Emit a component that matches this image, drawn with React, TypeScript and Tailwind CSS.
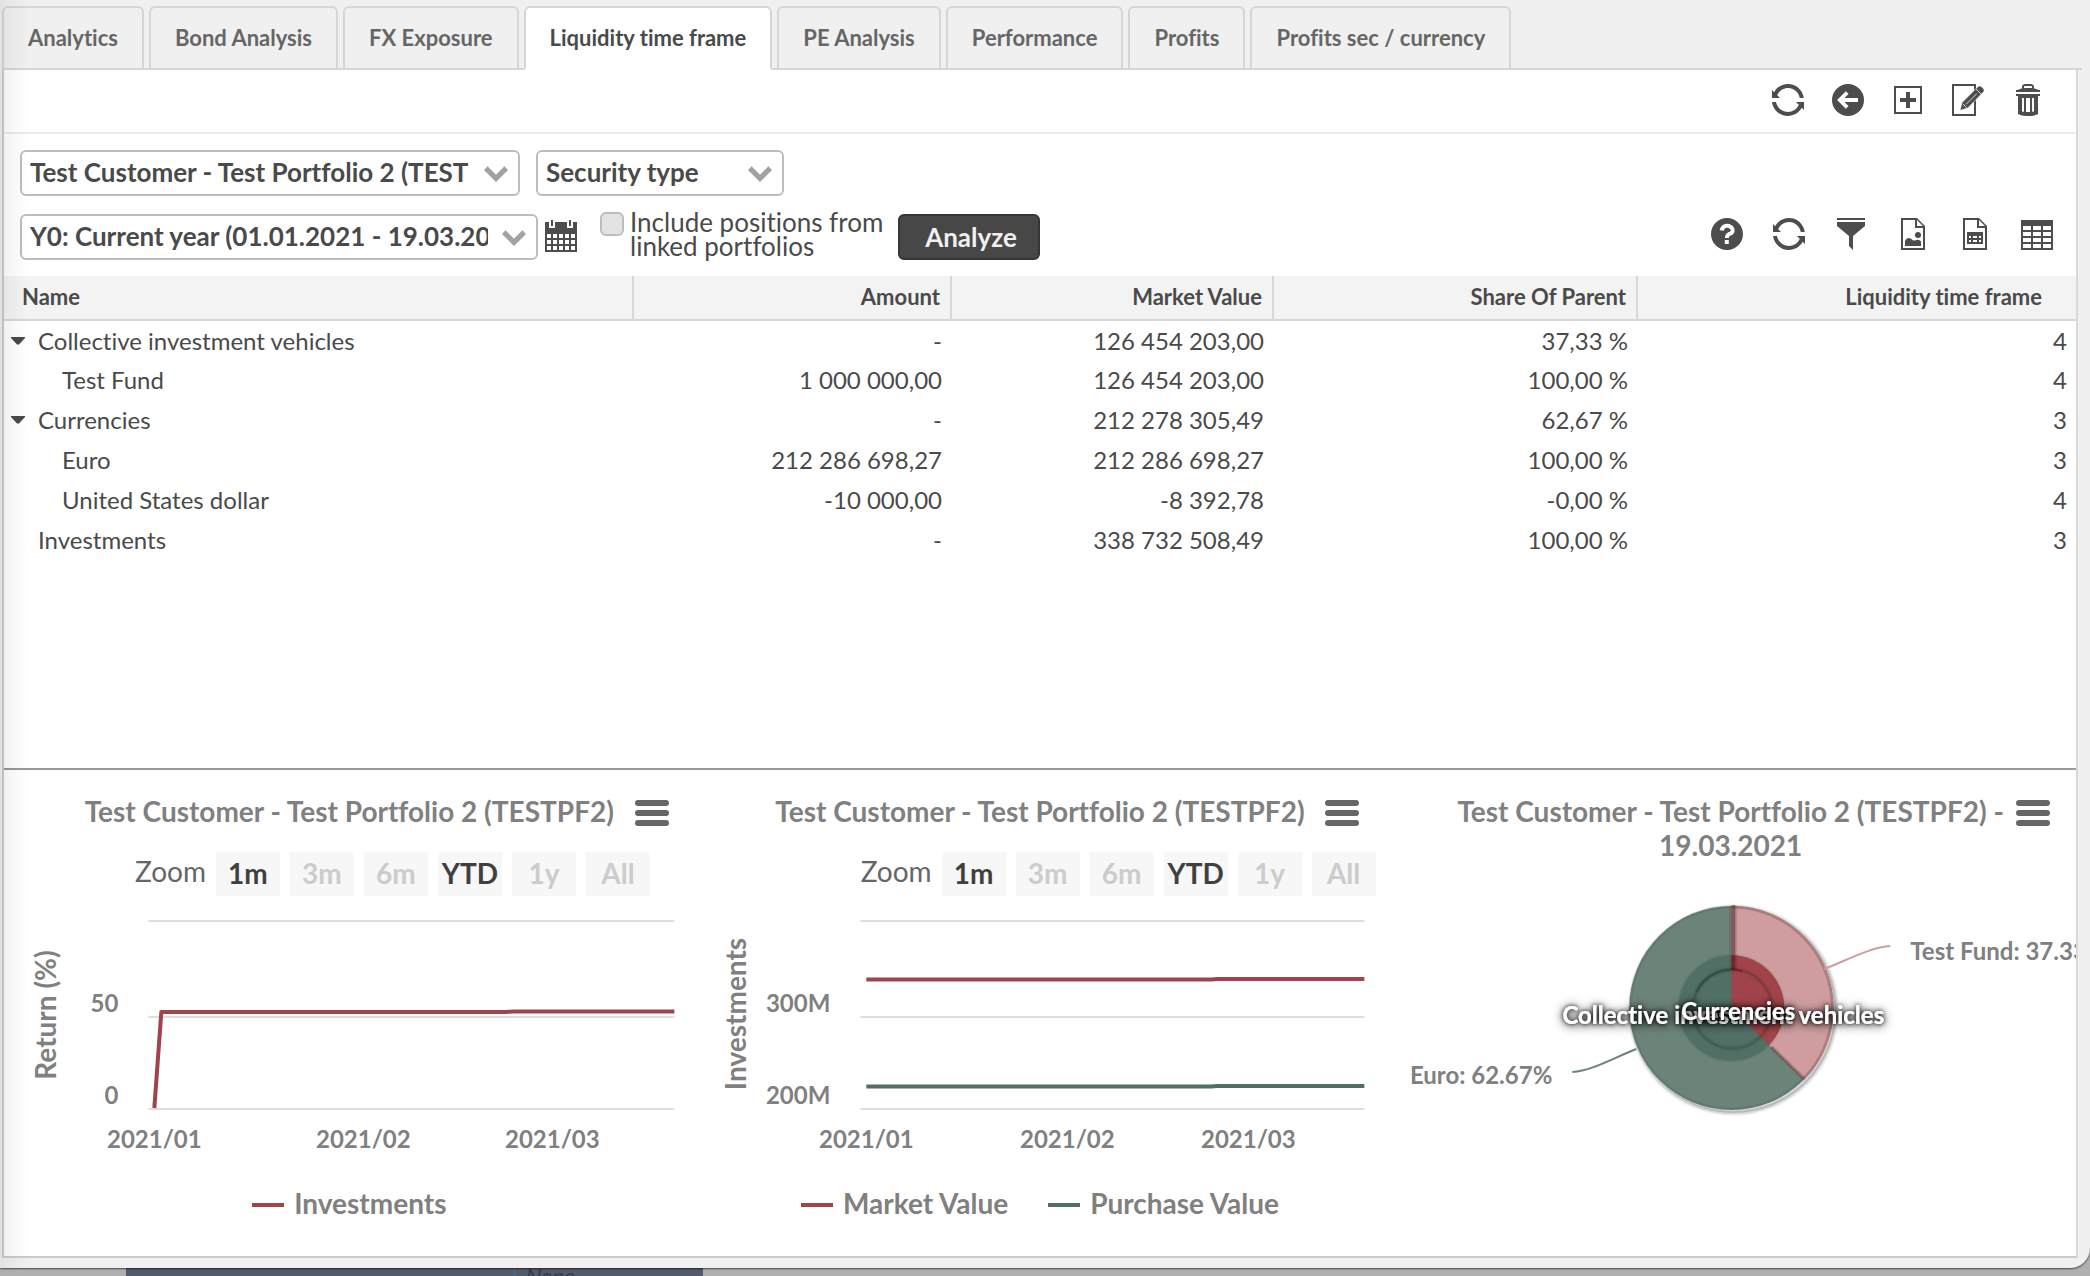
import { useState } from "react";
import type { ReactNode } from "react";
import clsx from "clsx";

const TABS = [
  "Analytics",
  "Bond Analysis",
  "FX Exposure",
  "Liquidity time frame",
  "PE Analysis",
  "Performance",
  "Profits",
  "Profits sec / currency",
];

type Row = {
  name: string;
  amount: string;
  marketValue: string;
  share: string;
  liquidity: string;
  children?: Row[];
};

const ROWS: Row[] = [
  {
    name: "Collective investment vehicles",
    amount: "-",
    marketValue: "126 454 203,00",
    share: "37,33 %",
    liquidity: "4",
    children: [
      { name: "Test Fund", amount: "1 000 000,00", marketValue: "126 454 203,00", share: "100,00 %", liquidity: "4" },
    ],
  },
  {
    name: "Currencies",
    amount: "-",
    marketValue: "212 278 305,49",
    share: "62,67 %",
    liquidity: "3",
    children: [
      { name: "Euro", amount: "212 286 698,27", marketValue: "212 286 698,27", share: "100,00 %", liquidity: "3" },
      { name: "United States dollar", amount: "-10 000,00", marketValue: "-8 392,78", share: "-0,00 %", liquidity: "4" },
    ],
  },
  { name: "Investments", amount: "-", marketValue: "338 732 508,49", share: "100,00 %", liquidity: "3" },
];

const RED = "#a04449";
const GREEN = "#516f65";

function App() {
  const [activeTab, setActiveTab] = useState("Liquidity time frame");

  return (
    <div className="flex min-h-screen flex-col bg-[#b0b0b0] font-[Lato,sans-serif] text-[#4a4a4a] [font-variant-ligatures:none]">
      <div className="relative flex flex-1 flex-col rounded-br-[20px] bg-[#f0f0f0] pb-2.5 shadow-[0_1px_2px_rgba(0,0,0,0.6)]">
        <div role="tablist" className="mr-2 ml-0.5 flex gap-[5px] border-b-2 border-[#d6d6d6] pt-1.5">
          {TABS.map((tab) => (
            <button
              key={tab}
              role="tab"
              aria-selected={tab === activeTab}
              onClick={() => setActiveTab(tab)}
              className={clsx(
                "-mb-0.5 h-16 rounded-t-md border-2 border-[#d6d6d6] px-6 pb-0.5 text-[22px] font-bold whitespace-nowrap",
                tab === activeTab ? "border-b-white bg-white text-[#4a4a4a]" : "bg-[#f0f0f0] text-[#666]"
              )}
            >
              {tab}
            </button>
          ))}
        </div>

        <div className="mr-3 ml-0.5 flex flex-1 flex-col border-2 border-t-0 border-[#cbcbcb] border-r-[#d8d8d8] bg-white">
          <Toolbar />
          <Filters />
          <div className="flex-1">
            <PositionsTable />
          </div>
          <Charts />
        </div>

        <div
          aria-hidden
          className="pointer-events-none absolute inset-y-0 left-0 w-7 bg-gradient-to-r from-black/6 to-transparent"
        />
      </div>

      <BackdropStrip />
    </div>
  );
}

function Toolbar() {
  return (
    <div className="flex h-16 items-center justify-end gap-7 border-b-2 border-[#ebebeb] pr-8 pb-0.5">
      <IconButton label="Refresh">
        <RefreshIcon />
      </IconButton>
      <IconButton label="Back">
        <circle cx="8" cy="8" r="8" />
        <path d="M13 8H4.2M7.6 4.3L3.9 8l3.7 3.7" fill="none" stroke="#fff" strokeWidth="1.9" />
      </IconButton>
      <IconButton label="Add">
        <path d="M1 1v14h14V1H1zM14 14H2V2h12v12z" />
        <path d="M7 4h2v3h3v2H9v3H7V9H4V7h3z" />
      </IconButton>
      <IconButton label="Edit">
        <path d="M0 0v16h12V0H0zM11 15H1V1h10v14z" />
        <path
          d="M4 13.2l1-3.900L12.900 1.400c.6-.6 1.300-.6 1.900 0l.8.8c.6.6.6 1.300 0 1.900L7.900 12 4 13.200z"
          stroke="#fff"
          strokeWidth=".3"
        />
        <path d="M5.400 9.900l1.900 1.900M7 10.200l5.400-5.400M12 2.500l2.600 2.600" stroke="#fff" strokeWidth=".4" />
      </IconButton>
      <IconButton label="Delete">
        <path d="M13 3s0-.51-2-.8v-.7C10.983.668 10.305 0 9.470 0h-3C5.655.017 5 .682 5 1.500v.7c-.765.068-1.452.359-2.007.806L2 3v1h12V3h-1zM6 1.500c.005-.274.226-.495.499-.5H9.500c.282 0 .513.220.529.499v.561C9.676 2.018 9.266 1.995 8.851 1.995 8.300 2 6.440 2 6 2.070V1.500z" />
        <path d="M2 5v1h1v9c1.234.631 2.692 1 4.236 1h1.528c1.544 0 3.002-.369 4.289-1.025L13 6h1V5H2zm4 8.920q-.51-.06-1-.17V7h1v6.920zM9 14H7V7h2v7zm2-.28c-.267.070-.606.136-.95.184L10 7h1v6.720z" />
      </IconButton>
    </div>
  );
}

function Filters() {
  return (
    <div className="pt-4 pb-4 pl-4">
      <div className="flex gap-4">
        <Select
          label="Portfolio"
          className="w-[500px]"
          options={["Test Customer - Test Portfolio 2 (TESTPF2)"]}
        />
        <Select label="Grouping" className="w-[248px]" options={["Security type"]} />
      </div>

      <div className="mt-3.5 flex min-h-[50px] items-end">
        <Select
          label="Period"
          className="w-[518px]"
          options={["Y0: Current year (01.01.2021 - 19.03.2021)"]}
        />
        <button aria-label="Pick dates" className="mb-2 ml-[7px] size-8">
          <Icon>
            <path d="M0 1h2v3h3V1h6v3h3V1h2v15H0V1zm1 6v2h2V7H1zm3 0v2h2V7H4zm3 0v2h2V7H7zm3 0v2h2V7h-2zm3 0v2h2V7h-2zM1 10v2h2v-2H1zm3 0v2h2v-2H4zm3 0v2h2v-2H7zm3 0v2h2v-2h-2zm3 0v2h2v-2h-2zM1 13v2h2v-2H1zm3 0v2h2v-2H4zm3 0v2h2v-2H7zm3 0v2h2v-2h-2zm3 0v2h2v-2h-2z" />
            <path d="M3 0h1v3H3zM12 0h1v3h-1z" />
          </Icon>
        </button>
        <div className="ml-[23px] flex w-[298px] items-start gap-1.5 self-start">
          <input
            id="linked"
            type="checkbox"
            className="mt-0.5 size-6 shrink-0 appearance-none rounded-md border-2 border-[#bdbdbd] bg-[#e3e3e3] checked:bg-[#4a4a4a]"
          />
          <label htmlFor="linked" className="text-[26px] leading-6">
            Include positions from
            <br />
            linked portfolios
          </label>
        </div>
        <button className="h-[46px] w-[142px] rounded-md border-2 border-[#363636] bg-[#474747] pl-1 text-[26px] font-bold text-[#f0f0f0]">
          Analyze
        </button>

        <div className="mb-2.5 ml-auto flex gap-[30px] pr-[23px]">
          <IconButton label="Help">
            <path d="M8 0C3.600 0 0 3.600 0 8s3.600 8 8 8 8-3.600 8-8-3.600-8-8-8zm.9 13h-2v-2h2v2zM11 8.100c-.4.400-.8.600-1.200.7-.6.400-.8.200-.8 1.200H7c0-2 1.200-2.600 2-3 .3-.1.500-.2.700-.4.100-.1.300-.3.100-.7-.2-.5-.8-1-1.700-1-1.400 0-1.600 1.200-1.700 1.500l-2-.3c.1-1.100 1-3.200 3.600-3.200 1.600 0 3 .9 3.600 2.200.4 1.100.2 2.200-.6 3z" />
          </IconButton>
          <IconButton label="Reload">
            <RefreshIcon />
          </IconButton>
          <IconButton label="Filter">
            <path d="M1 0h14v1H1zM1 2v2l6 5v5l2 2V9l6-5V2H1z" />
          </IconButton>
          <IconButton label="Export image">
            <FileOutline />
            <circle cx="10.500" cy="8.500" r="1.500" />
            <path d="M4 11.500C4.400 10.500 5.200 10 6 10c1.200 0 1.600 1.300 2.500 1.300.700 0 1-.4 1.700-.4.800 0 1.400.3 1.800.8V14H4v-2.500z" />
          </IconButton>
          <IconButton label="Export spreadsheet">
            <FileOutline />
            <path d="M4 7v6h8V7H4zm2 3H5V9h1v1zm3 0H7V9h2v1zm2 0h-1V9h1v1zm-5 2H5v-1h1v1zm3 0H7v-1h2v1zm2 0h-1v-1h1v1z" />
          </IconButton>
          <IconButton label="Columns">
            <path d="M0 1v15h16V1H0zm5 14H1v-2h4v2zm0-3H1v-2h4v2zm0-3H1V7h4v2zm0-3H1V4h4v2zm5 9H6v-2h4v2zm0-3H6v-2h4v2zm0-3H6V7h4v2zm0-3H6V4h4v2zm5 9h-4v-2h4v2zm0-3h-4v-2h4v2zm0-3h-4V7h4v2zm0-3h-4V4h4v2z" />
          </IconButton>
        </div>
      </div>
    </div>
  );
}

function Select({ label, options, className }: { label: string; options: string[]; className: string }) {
  return (
    <div className={clsx("relative h-[46px]", className)}>
      <select
        aria-label={label}
        className="h-full w-full appearance-none rounded-md border-2 border-[#bdbdbd] bg-white pr-12 pb-0.5 pl-2 text-[26px] font-bold"
      >
        {options.map((option) => (
          <option key={option}>{option}</option>
        ))}
      </select>
      <svg viewBox="0 0 24 16" className="pointer-events-none absolute top-4 right-3 h-4 w-6">
        <path d="M1.800 2.200L12 12.300 22.200 2.200" fill="none" stroke="#a2a2a2" strokeWidth="5.200" />
      </svg>
    </div>
  );
}

function PositionsTable() {
  const [collapsed, setCollapsed] = useState<string[]>([]);

  const toggle = (name: string) =>
    setCollapsed((prev) => (prev.includes(name) ? prev.filter((n) => n !== name) : [...prev, name]));

  return (
    <table className="w-full table-fixed border-collapse text-right text-2xl">
      <thead>
        <tr className="h-11 border-b-2 border-[#d8d8d8] bg-[#f3f3f3] text-[22px]">
          <th className="w-[629px] border-r-2 border-[#d8d8d8] pb-0.5 pl-[18px] text-left font-bold">Name</th>
          <th className="w-[318px] border-r-2 border-[#d8d8d8] pr-2.5 pb-0.5 font-bold">Amount</th>
          <th className="w-[322px] border-r-2 border-[#d8d8d8] pr-2.5 pb-0.5 font-bold">Market Value</th>
          <th className="w-[364px] border-r-2 border-[#d8d8d8] pr-2.5 pb-0.5 font-bold">Share Of Parent</th>
          <th className="pr-[34px] pb-0.5 font-bold">Liquidity time frame</th>
        </tr>
      </thead>
      <tbody>
        {ROWS.flatMap((row) => {
          const open = !collapsed.includes(row.name);
          return [
            <PositionRow key={row.name} row={row} open={open} onToggle={() => toggle(row.name)} />,
            ...(open ? (row.children ?? []) : []).map((child) => <PositionRow key={child.name} row={child} nested />),
          ];
        })}
      </tbody>
    </table>
  );
}

function PositionRow({
  row,
  nested,
  open,
  onToggle,
}: {
  row: Row;
  nested?: boolean;
  open?: boolean;
  onToggle?: () => void;
}) {
  return (
    <tr className="h-10">
      <td className="text-left">
        <div className={clsx("flex items-center", nested ? "pl-[58px]" : "pl-[7px]")}>
          {!nested && (
            <span className="flex w-[27px]">
              {row.children && (
                <button aria-label={`Toggle ${row.name}`} aria-expanded={open} onClick={onToggle}>
                  <svg viewBox="0 0 14 8" className={clsx("h-2 w-3.5", !open && "-rotate-90")}>
                    <path d="M0 0h14v1L8 7.500H6L0 1z" fill="#4a4a4a" />
                  </svg>
                </button>
              )}
            </span>
          )}
          {row.name}
        </div>
      </td>
      <td className="pr-[9px]">{row.amount}</td>
      <td className="pr-[9px]">{row.marketValue}</td>
      <td className="pr-[9px]">{row.share}</td>
      <td className="pr-[9px]">{row.liquidity}</td>
    </tr>
  );
}

function Charts() {
  return (
    <div className="grid grid-cols-3 border-t-2 border-[#999] text-[#808080]">
      <ChartPanel title="Test Customer - Test Portfolio 2 (TESTPF2)">
        <RangeSelector className="pl-[131px]" />
        <svg viewBox="0 0 690 290" className="h-[290px] w-full" fill="#808080">
          <path d="M144 25h526M144 121h526M144 213h526" stroke="#dedede" strokeWidth="2" />
          <path d="M150 212L157 116H500L510 115.500H670" fill="none" stroke={RED} strokeWidth="4" strokeLinejoin="round" />
          <g className="text-2xl font-bold">
            <g textAnchor="end">
              <text x="114" y="116">50</text>
              <text x="114" y="208">0</text>
            </g>
            <g textAnchor="middle">
              <text x="150" y="252">2021/01</text>
              <text x="359" y="252">2021/02</text>
              <text x="548" y="252">2021/03</text>
            </g>
          </g>
          <text transform="translate(52 119) rotate(-90)" textAnchor="middle" className="text-[28px] font-bold">
            Return (%)
          </text>
        </svg>
        <Legend items={[["Investments", RED]]} />
      </ChartPanel>

      <ChartPanel title="Test Customer - Test Portfolio 2 (TESTPF2)">
        <RangeSelector className="pl-[166px]" />
        <svg viewBox="0 0 690 290" className="h-[290px] w-full" fill="#808080">
          <path d="M165 25h504M165 121h504M165 213h504" stroke="#dedede" strokeWidth="2" />
          <path d="M171 83.500H516L522 83H669" fill="none" stroke={RED} strokeWidth="4" />
          <path d="M171 190.500H516L522 190H669" fill="none" stroke={GREEN} strokeWidth="4" />
          <g className="text-2xl font-bold">
            <g textAnchor="end">
              <text x="135" y="116">300M</text>
              <text x="135" y="208">200M</text>
            </g>
            <g textAnchor="middle">
              <text x="171" y="252">2021/01</text>
              <text x="372" y="252">2021/02</text>
              <text x="553" y="252">2021/03</text>
            </g>
          </g>
          <text transform="translate(51 118) rotate(-90)" textAnchor="middle" className="text-[28px] font-bold">
            Investments
          </text>
        </svg>
        <Legend
          items={[
            ["Market Value", RED],
            ["Purchase Value", GREEN],
          ]}
        />
      </ChartPanel>

      <ChartPanel title="Test Customer - Test Portfolio 2 (TESTPF2) - 19.03.2021">
        <AllocationPie />
      </ChartPanel>
    </div>
  );
}

function ChartPanel({ title, children }: { title: string; children: ReactNode }) {
  return (
    <section className="relative min-w-0 overflow-hidden pt-6">
      <h2 className="mx-auto w-[562px] text-center text-[28px] leading-[34px] font-bold">{title}</h2>
      <button aria-label="Chart menu" className="absolute top-[30px] right-[26px]">
        <svg viewBox="0 0 34 26" className="h-[26px] w-[34px]">
          <path d="M3 3h28M3 13h28M3 23h28" stroke="#666" strokeWidth="6" strokeLinecap="round" />
        </svg>
      </button>
      {children}
    </section>
  );
}

function RangeSelector({ className }: { className: string }) {
  const [range, setRange] = useState("YTD");

  return (
    <div className={clsx("mt-6 flex gap-2.5 text-[28px]", className)}>
      <span className="leading-[38px] text-[#666]">Zoom</span>
      {["1m", "3m", "6m", "YTD", "1y", "All"].map((item) => (
        <button
          key={item}
          disabled={item !== "1m" && item !== "YTD"}
          aria-pressed={item === range}
          onClick={() => setRange(item)}
          className="h-11 w-16 shrink-0 bg-[#f7f7f7] pb-0.5 font-bold text-[#404040] disabled:text-[#ccc]"
        >
          {item}
        </button>
      ))}
    </div>
  );
}

function Legend({ items }: { items: [string, string][] }) {
  return (
    <ul className="flex justify-center gap-10 pb-9 text-[28px] leading-[34px] font-bold">
      {items.map(([name, color]) => (
        <li key={name} className="flex items-center gap-2.5">
          <span className="mt-1 h-1 w-8" style={{ backgroundColor: color }} />
          {name}
        </li>
      ))}
    </ul>
  );
}

function AllocationPie() {
  // slices start at 12 o'clock, the fund takes 37.33% clockwise
  return (
    <svg viewBox="0 0 690 394" className="h-[394px] w-full">
      <defs>
        <filter id="labelShadow" x="-20%" y="-80%" width="140%" height="260%">
          <feDropShadow dx="0" dy="0" stdDeviation="2" floodColor="#000" floodOpacity="0.9" />
          <feDropShadow dx="0" dy="1" stdDeviation="5" floodColor="#000" floodOpacity="0.8" />
        </filter>
      </defs>
      <g transform="translate(346 146)">
        <g fill="none" stroke="#000" transform="translate(2 2)">
          <circle r="102" strokeWidth="8" strokeOpacity="0.050" />
          <circle r="102" strokeWidth="5" strokeOpacity="0.100" />
          <circle r="102" strokeWidth="2" strokeOpacity="0.150" />
        </g>
        <circle r="102.500" fill="#e9e9e9" />
        <circle r="102" fill="#6b8379" />
        <path d="M0 0V-102A102 102 0 0 1 72.900 71.400z" fill="#cf9da0" />
        <path d="M1-101A101 101 0 0 1 72 71" fill="none" stroke="#a04449" strokeOpacity="0.250" strokeWidth="3" />
        <circle r="101" fill="none" stroke="#1f3a30" strokeOpacity="0.120" strokeWidth="3" />
        <path d="M73 71L40 39" stroke="#5a2c30" strokeOpacity="0.250" strokeWidth="4" />
        <path d="M73 71L40 39" stroke="#5a2c30" strokeOpacity="0.350" strokeWidth="1.500" />

        <circle r="54.500" fill="#000" fillOpacity="0.050" />
        <circle r="52.700" fill={GREEN} />
        <path d="M0 0V-52.700A52.700 52.700 0 0 1 37.700 36.900z" fill={RED} />
        <g fill="none" stroke="#000" transform="translate(1 1)">
          <circle r="39.500" strokeWidth="6" strokeOpacity="0.050" />
          <circle r="39.500" strokeWidth="2" strokeOpacity="0.120" />
          <path d="M-36-17A39.500 39.500 0 0 1 10-38" strokeWidth="3" strokeOpacity="0.180" />
        </g>
        <path d="M2-102V-38" stroke="#3a1014" strokeOpacity="0.120" strokeWidth="8" />
        <path d="M2-103V-38" stroke="#3a1014" strokeOpacity="0.420" strokeWidth="4" />

        <path d="M93-39C116-48 140-61 159-62" fill="none" stroke="#cf9da0" strokeWidth="2" />
        <path d="M-95 41C-118 50-140 63-159 64" fill="none" stroke="#6b8379" strokeWidth="2" />
      </g>

      <g className="text-2xl font-bold" fill="#808080">
        <text x="525" y="98">Test Fund: 37.33%</text>
        <text x="167" y="222" textAnchor="end">Euro: 62.67%</text>
        <g fill="#fff" textAnchor="middle">
          <text x="338" y="162" filter="url(#labelShadow)">Collective investment vehicles</text>
          <text x="353" y="158" filter="url(#labelShadow)">Currencies</text>
        </g>
      </g>
    </svg>
  );
}

function BackdropStrip() {
  return (
    <div className="flex h-2 overflow-hidden pl-[126px]">
      <div className="flex w-[577px] bg-[#535a69] pl-[387px]">
        <span className="w-[3px] bg-[#4a6487]" />
        <span className="pl-2.5 text-[22px] leading-4 text-[#343a47] italic">None</span>
      </div>
    </div>
  );
}

function IconButton({ label, children }: { label: string; children: ReactNode }) {
  return (
    <button aria-label={label} className="size-8">
      <Icon>{children}</Icon>
    </button>
  );
}

function Icon({ children }: { children: ReactNode }) {
  return (
    <svg viewBox="0 0 16 16" className="size-8" fill="#4d4d4d">
      {children}
    </svg>
  );
}

function RefreshIcon() {
  return (
    <>
      <path d="M2.600 5.600C3.500 3.500 5.600 2 8 2c3 0 5.400 2.200 5.900 5h2C15.400 3.100 12.100 0 8 0 5 0 2.400 1.600 1.100 4.100L0 3v4h4L2.600 5.600z" />
      <path d="M16 9h-4.100l1.500 1.400c-.9 2.100-3 3.600-5.500 3.600-2.900 0-5.400-2.200-5.900-5H0c.5 3.900 3.900 7 7.900 7 3 0 5.600-1.700 7-4.100l1.100 1.100V9z" />
    </>
  );
}

function FileOutline() {
  return <path d="M10 0H2v16h12V4l-4-4zm3 15H3V1h6v4h4v10zM10 4V1l3 3h-3z" />;
}

export default App;
